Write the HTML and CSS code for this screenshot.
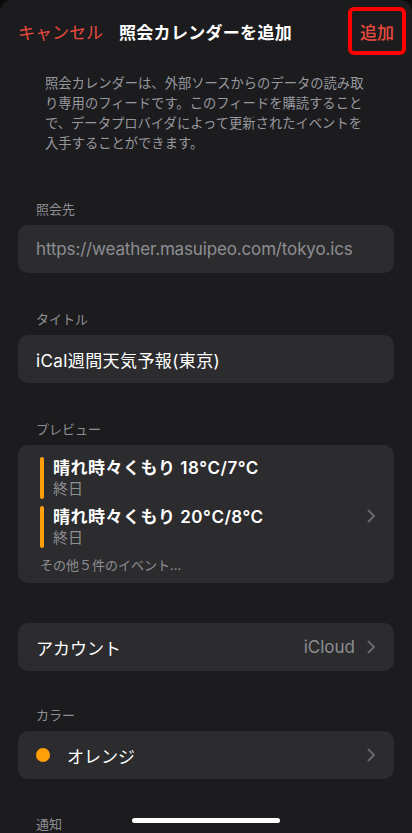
FILE: index.html
```html
<!DOCTYPE html>
<html lang="ja">
<head>
<meta charset="utf-8">
<meta name="viewport" content="width=device-width, initial-scale=1">
<link rel="stylesheet" href="styles.css">
<title>照会カレンダーを追加</title>
</head>
<body>
<div class="sheet">
  <header class="nav">
    <span class="nav-cancel">キャンセル</span>
    <span class="nav-title">照会カレンダーを追加</span>
    <span class="nav-add">追加</span>
  </header>

  <p class="desc">照会カレンダーは、外部ソースからのデータの読み取<br>り専用のフィードです。このフィードを購読すること<br>で、データプロバイダによって更新されたイベントを<br>入手することができます。</p>

  <section class="section s-url">
    <div class="label">照会先</div>
    <div class="card row"><span class="muted url">https://weather.masuipeo.com/tokyo.ics</span></div>
  </section>

  <section class="section s-title">
    <div class="label">タイトル</div>
    <div class="card row"><span class="title-val">iCal週間天気予報(東京)</span></div>
  </section>

  <section class="section s-preview">
    <div class="label">プレビュー</div>
    <div class="card preview">
      <div class="events">
        <div class="event">
          <span class="bar"></span>
          <div class="event-text">
            <div class="event-title">晴れ時々くもり 18°C/7°C</div>
            <div class="event-sub">終日</div>
          </div>
        </div>
        <div class="event">
          <span class="bar"></span>
          <div class="event-text">
            <div class="event-title">晴れ時々くもり 20°C/8°C</div>
            <div class="event-sub">終日</div>
          </div>
        </div>
        <div class="more">その他５件のイベント...</div>
      </div>
      <svg class="chev" width="9" height="14" viewBox="0 0 9 14"><path d="M1.5 1.5 L7 7 L1.5 12.5" fill="none" stroke="currentColor" stroke-width="2" stroke-linecap="round" stroke-linejoin="round"/></svg>
    </div>
  </section>

  <section class="section s-account">
    <div class="card row">
      <span class="grow">アカウント</span>
      <span class="muted">iCloud</span>
      <svg class="chev" width="9" height="14" viewBox="0 0 9 14"><path d="M1.5 1.5 L7 7 L1.5 12.5" fill="none" stroke="currentColor" stroke-width="2" stroke-linecap="round" stroke-linejoin="round"/></svg>
    </div>
  </section>

  <section class="section s-color">
    <div class="label">カラー</div>
    <div class="card row">
      <span class="dot"></span>
      <span class="grow">オレンジ</span>
      <svg class="chev" width="9" height="14" viewBox="0 0 9 14"><path d="M1.5 1.5 L7 7 L1.5 12.5" fill="none" stroke="currentColor" stroke-width="2" stroke-linecap="round" stroke-linejoin="round"/></svg>
    </div>
  </section>

  <section class="section s-notify">
    <div class="label">通知</div>
    <div class="card row"><span class="grow">通知を除去</span></div>
  </section>
</div>
<div class="home-indicator"></div>
</body>
</html>
```

FILE: styles.css
```css
* { box-sizing: border-box; }

html, body {
  margin: 0;
  padding: 0;
  background: #0c0c0d;
}

body {
  font-family: "Inter", "Noto Sans CJK JP", sans-serif;
  color: #ffffff;
  -webkit-font-smoothing: antialiased;
}

.sheet {
  background: #1c1c1e;
  border-radius: 12px 12px 0 0;
  min-height: 1000px;
  padding-bottom: 40px;
}

.nav {
  display: flex;
  align-items: center;
  height: 62px;
  padding: 0 6px 0 18px;
  font-size: 17px;
}

.nav-cancel {
  color: #eb4b3f;
}

.nav-title {
  margin-left: 16px;
  font-weight: 600;
  letter-spacing: 0.3px;
  flex: 1;
}

.nav-add {
  display: flex;
  align-items: center;
  justify-content: center;
  width: 58px;
  height: 48px;
  border: 4px solid #ff0000;
  border-radius: 6px;
  color: #eb4b3f;
  font-weight: 500;
}

.desc {
  margin: 0;
  padding: 11px 40px 0 45px;
  font-size: 13.3px;
  line-height: 20px;
  color: #98989e;
}

.section {
  margin-top: 37px;
}

.s-url { margin-top: 47px; }
.s-account { margin-top: 40px; }
.s-color { margin-top: 35px; }
.s-notify { margin-top: 36px; }

.label {
  padding: 0 36px;
  font-size: 13px;
  line-height: 18px;
  color: #8e8e93;
  margin-bottom: 7px;
}

.card {
  margin: 0 18px;
  background: #2c2c2e;
  border-radius: 10px;
}

.row {
  display: flex;
  align-items: center;
  height: 48px;
  padding: 0 18px 0 18px;
  font-size: 17px;
}

.grow { flex: 1; }

.muted { color: #8e8e93; }

.url { letter-spacing: -0.15px; }

.title-val { letter-spacing: 0.4px; }

.chev {
  color: #68686d;
  margin-left: 12px;
  flex: none;
}

.preview {
  display: flex;
  align-items: center;
  padding: 12px 18px 9px 22px;
}

.events {
  flex: 1;
  display: flex;
  flex-direction: column;
  gap: 7px;
}

.event {
  display: flex;
  gap: 9px;
}

.bar {
  width: 4px;
  border-radius: 2px;
  background: #ff9f0a;
  flex: none;
}

.event-title {
  font-size: 17px;
  font-weight: 600;
  line-height: 22px;
  letter-spacing: 0.5px;
}

.event-sub {
  font-size: 15px;
  line-height: 20px;
  color: #8e8e93;
}

.more {
  font-size: 13px;
  line-height: 18px;
  color: #8e8e93;
  margin-top: 1px;
}

.dot {
  width: 14px;
  height: 14px;
  border-radius: 50%;
  background: #ff9f0a;
  margin-right: 17px;
  flex: none;
}

.home-indicator {
  position: fixed;
  left: 132px;
  bottom: 10px;
  width: 148px;
  height: 5px;
  border-radius: 3px;
  background: #ffffff;
}
```
